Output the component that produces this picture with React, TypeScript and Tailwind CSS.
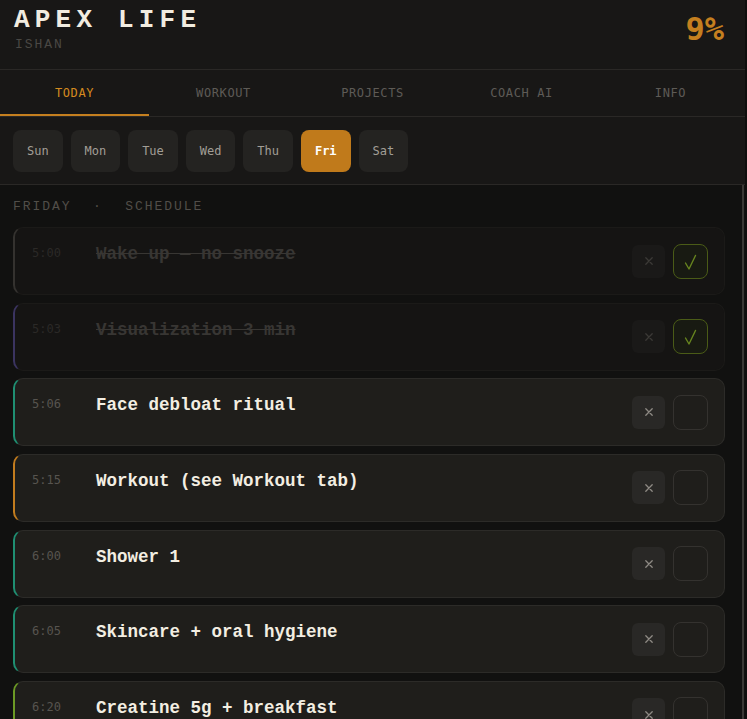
import { useState } from 'react'

const days = ['Sun', 'Mon', 'Tue', 'Wed', 'Thu', 'Fri', 'Sat']
const tabs = ['TODAY', 'WORKOUT', 'PROJECTS', 'COACH AI', 'INFO']

type Task = {
  time: string
  title: string
  accent: string
  done?: boolean
}

const tasks: Task[] = [
  { time: '5:00', title: 'Wake up — no snooze', accent: 'border-l-[#34322f]', done: true },
  { time: '5:03', title: 'Visualization 3 min', accent: 'border-l-[#3b3460]', done: true },
  { time: '5:06', title: 'Face debloat ritual', accent: 'border-l-[#1f8f72]' },
  { time: '5:15', title: 'Workout (see Workout tab)', accent: 'border-l-[#c27c1e]' },
  { time: '6:00', title: 'Shower 1', accent: 'border-l-[#1f8f72]' },
  { time: '6:05', title: 'Skincare + oral hygiene', accent: 'border-l-[#1f8f72]' },
  { time: '6:20', title: 'Creatine 5g + breakfast', accent: 'border-l-[#6c9a25]' },
]

const mono = "font-['DejaVu_Sans_Mono',monospace]"
const courier = "font-['Liberation_Mono','Courier_New',monospace]"

function XIcon({ color }: { color: string }) {
  return (
    <svg width="10" height="10" viewBox="0 0 10 10">
      <path d="M1.8 1.8 L8.2 8.2 M8.2 1.8 L1.8 8.2" stroke={color} strokeWidth="1.3" strokeLinecap="round" />
    </svg>
  )
}

function TaskCard({ task }: { task: Task }) {
  const done = task.done
  return (
    <div
      className={`flex h-[68px] shrink-0 items-center rounded-[10px] border border-l-2 ${task.accent} pl-[17px] pr-[16px] ${
        done ? 'border-[#1b1a18] bg-[#151413]' : 'border-[#2c2b28] bg-[#1f1e1b]'
      }`}
    >
      <div className="flex flex-1 self-start pt-[15px]">
        <span
          className={`w-[64px] ${mono} text-[12px] leading-[20px] ${done ? 'text-[#2b2927]' : 'text-[#57544f]'}`}
        >
          {task.time}
        </span>
        <span
          className={`${courier} text-[17.5px] font-bold leading-[22px] ${
            done ? 'text-[#383633] line-through decoration-[#383633]' : 'text-[#f3eee2]'
          }`}
        >
          {task.title}
        </span>
      </div>
      <div className="flex items-center gap-2">
        <button
          className={`flex h-[33px] w-[33px] items-center justify-center rounded-md ${
            done ? 'bg-[#1a1918]' : 'bg-[#292826]'
          }`}
        >
          <XIcon color={done ? '#3b3936' : '#8e8a84'} />
        </button>
        <button
          className={`flex h-[35px] w-[35px] items-center justify-center rounded-lg border ${
            done ? 'border-[#4a5b17] bg-[#181a12]' : 'border-[#34322f] bg-transparent'
          }`}
        >
          {done && (
            <svg width="33" height="33" viewBox="0 0 33 33">
              <polyline
                points="11.5,18 15,24 21.5,10.5"
                fill="none"
                stroke="#67851f"
                strokeWidth="1.4"
                strokeLinecap="round"
                strokeLinejoin="round"
              />
            </svg>
          )}
        </button>
      </div>
    </div>
  )
}

export default function App() {
  const [tab, setTab] = useState('TODAY')
  const [day, setDay] = useState('Fri')

  return (
    <div className="flex h-[719px] w-full overflow-hidden bg-[#0e0e0d]">
      <div className="flex w-[745px] flex-col">
        {/* Header */}
        <header className="flex h-[70px] shrink-0 items-start justify-between border-b border-[#2a2826] bg-[#181716] pl-[14px] pr-[21px]">
          <div className="pt-[5px]">
            <h1 className={`${courier} text-[26px] font-bold leading-[30px] tracking-[0.2em] text-[#f1ece0]`}>
              APEX LIFE
            </h1>
            <p className={`${courier} mt-[2px] pl-[1px] text-[13px] leading-[16px] tracking-[0.15em] text-[#4a4844]`}>
              ISHAN
            </p>
          </div>
          <div className={`${mono} pt-[10px] text-[32px] font-bold leading-[38px] text-[#c47f1f]`}>9%</div>
        </header>

        {/* Tabs */}
        <nav className="flex h-[47px] shrink-0 border-b border-[#2a2826] bg-[#181716]">
          {tabs.map((t) => (
            <button
              key={t}
              onClick={() => setTab(t)}
              className={`flex h-[46px] flex-1 items-center justify-center border-b-2 pt-px ${mono} text-[12px] tracking-[0.05em] ${
                tab === t ? 'border-[#c47f1f] text-[#d48a1f]' : 'border-transparent text-[#5e5b56]'
              }`}
            >
              {t}
            </button>
          ))}
        </nav>

        {/* Days */}
        <div className="flex h-[68px] shrink-0 items-start gap-2 border-b border-[#2a2826] bg-[#181716] px-[13px] pt-[13px]">
          {days.map((d) => (
            <button
              key={d}
              onClick={() => setDay(d)}
              className={`h-[42px] w-[49.6px] rounded-lg ${mono} text-[12px] ${
                day === d ? 'bg-[#c07a1b] font-bold text-white' : 'bg-[#242321] text-[#a29e96]'
              }`}
            >
              {d}
            </button>
          ))}
        </div>

        {/* Schedule */}
        <div className="flex min-h-0 flex-1 bg-[#111110]">
          <div className="flex min-h-0 flex-1 flex-col overflow-hidden pl-[13px] pr-[17px] pt-[14px]">
            <p
              className={`${courier} mb-[12px] whitespace-pre text-[13px] leading-[16px] tracking-[0.15em] text-[#514e49]`}
            >
              FRIDAY{'  '}
              <span className="mr-[3px] ml-[2px]">·</span>
              {'  '}SCHEDULE
            </p>
            <div className="flex flex-col gap-[7.67px]">
              {tasks.map((t) => (
                <TaskCard key={t.time} task={t} />
              ))}
            </div>
          </div>
          <div className="w-[2px] bg-[#3a3835]" />
          <div className="w-px bg-[#111110]" />
        </div>
      </div>
    </div>
  )
}
